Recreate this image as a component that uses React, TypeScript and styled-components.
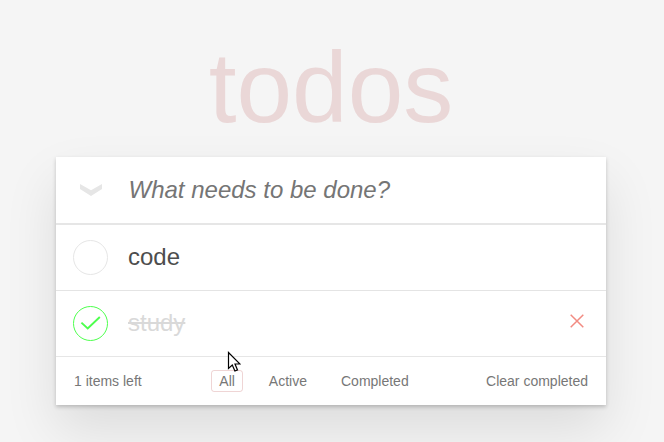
import React from "react";
import styled, { createGlobalStyle } from "styled-components";

const GlobalStyle = createGlobalStyle`
  * { box-sizing: border-box; }
  html, body { margin: 0; padding: 0; height: 100%; overflow: hidden; }
  body {
    background: #f5f5f5;
    font: 14px/1.4em "Liberation Sans", Arial, sans-serif;
    color: #4d4d4d;
  }
  button { margin: 0; padding: 0; border: 0; background: none; font: inherit; color: inherit; }
`;

const Page = styled.main`
  width: 550px;
  margin-left: 56px;
  padding-top: 31px;
`;

const Title = styled.h1`
  margin: 0 0 14px;
  height: 112px;
  font-size: 100px;
  font-weight: 300;
  line-height: 112px;
  text-align: center;
  color: rgba(175, 47, 47, 0.15);
`;

const Card = styled.section`
  background: #fff;
  box-shadow: 0 2px 4px 0 rgba(0, 0, 0, 0.2), 0 25px 50px 0 rgba(0, 0, 0, 0.1);
`;

const NewTodo = styled.header`
  display: flex;
  height: 66px;
  align-items: center;
`;

const ToggleAll = styled.button`
  display: flex;
  width: 72.5px;
  padding-left: 23px;
  svg { display: block; }
`;

const Input = styled.input`
  flex: 1;
  min-width: 0;
  padding: 0;
  border: 0;
  outline: 0;
  background: transparent;
  font: 24px/34px "Liberation Sans", Arial, sans-serif;
  &::placeholder { font-style: italic; color: #757575; opacity: 1; }
`;

const List = styled.ul`
  margin: 0;
  padding: 0;
  list-style: none;
  border-top: 2px solid #e6e6e6;
`;

const Item = styled.li`
  display: flex;
  height: 66px;
  align-items: center;
  border-bottom: 1px solid #e4e4e4;
  &:last-child { height: 65px; border-bottom: 0; }
`;

const Check = styled.button`
  display: flex;
  width: 72px;
  padding-left: 16px;
`;

const Label = styled.span<{ $done?: boolean }>`
  flex: 1;
  margin-top: -1px;
  font-size: 24px;
  line-height: 28px;
  color: ${(p) => (p.$done ? "#d9d9d9" : "#4d4d4d")};
  text-decoration: ${(p) => (p.$done ? "line-through" : "none")};
`;

const Remove = styled.button`
  display: flex;
  margin: 0 22px 5px 0;
`;

const Footer = styled.footer`
  display: grid;
  grid-template-columns: 137.3px 1fr auto;
  align-items: center;
  height: 49px;
  padding: 0 18px;
  border-top: 1px solid #e6e6e6;
  line-height: 20px;
  color: #777;
`;

const Filters = styled.nav`
  display: flex;
  gap: 18px;
`;

const Filter = styled.button<{ $active?: boolean }>`
  height: 22px;
  padding: 0 7px;
  border: 1px solid ${(p) => (p.$active ? "rgba(175, 47, 47, 0.2)" : "transparent")};
  border-radius: 3px;
  line-height: 20px;
`;

const Pointer = styled.svg`
  position: absolute;
  left: 227px;
  top: 350.5px;
`;

function Circle({ done }: { done?: boolean }) {
  return (
    <svg width="37" height="37" viewBox="0 0 37 37" fill="none">
      <circle cx="18.5" cy="18.5" r="17" stroke={done ? "#4dff4d" : "#e6e6e6"} />
      {done && <path d="M9.4 17.6l6.3 5.9L27.8 12" stroke="#4dff4d" strokeWidth="1.9" />}
    </svg>
  );
}

const todos = [
  { text: "code", done: false },
  { text: "study", done: true },
];

export default function App() {
  return (
    <>
      <GlobalStyle />
      <Page>
        <Title>todos</Title>
        <Card>
          <NewTodo>
            <ToggleAll aria-label="Mark all as complete">
              <svg width="24" height="12" viewBox="0 0 24 12" fill="#e6e6e6">
                <path d="M1 0l11 6.2L23 0v5l-11 7L1 5z" />
              </svg>
            </ToggleAll>
            <Input placeholder="What needs to be done?" />
          </NewTodo>
          <List>
            {todos.map((t) => (
              <Item key={t.text}>
                <Check aria-label="Toggle"><Circle done={t.done} /></Check>
                <Label $done={t.done}>{t.text}</Label>
                {t.done && (
                  <Remove aria-label="Delete">
                    <svg width="14" height="14" viewBox="0 0 14 14" stroke="#f28b82" strokeWidth="1.5">
                      <path d="M.7.7l12.6 12.6M13.3.7L.7 13.3" />
                    </svg>
                  </Remove>
                )}
              </Item>
            ))}
          </List>
          <Footer>
            <span>1 items left</span>
            <Filters>
              <Filter $active>All</Filter>
              <Filter>Active</Filter>
              <Filter>Completed</Filter>
            </Filters>
            <button>Clear completed</button>
          </Footer>
        </Card>
      </Page>
      <Pointer width="14" height="22" viewBox="0 0 14 22">
        <path d="M1.5 1.5v16l3.8-3.5 2.6 6 2.6-1.1-2.5-5.9h5z" fill="#fff" stroke="#000" strokeWidth="1.2" />
      </Pointer>
    </>
  );
}
